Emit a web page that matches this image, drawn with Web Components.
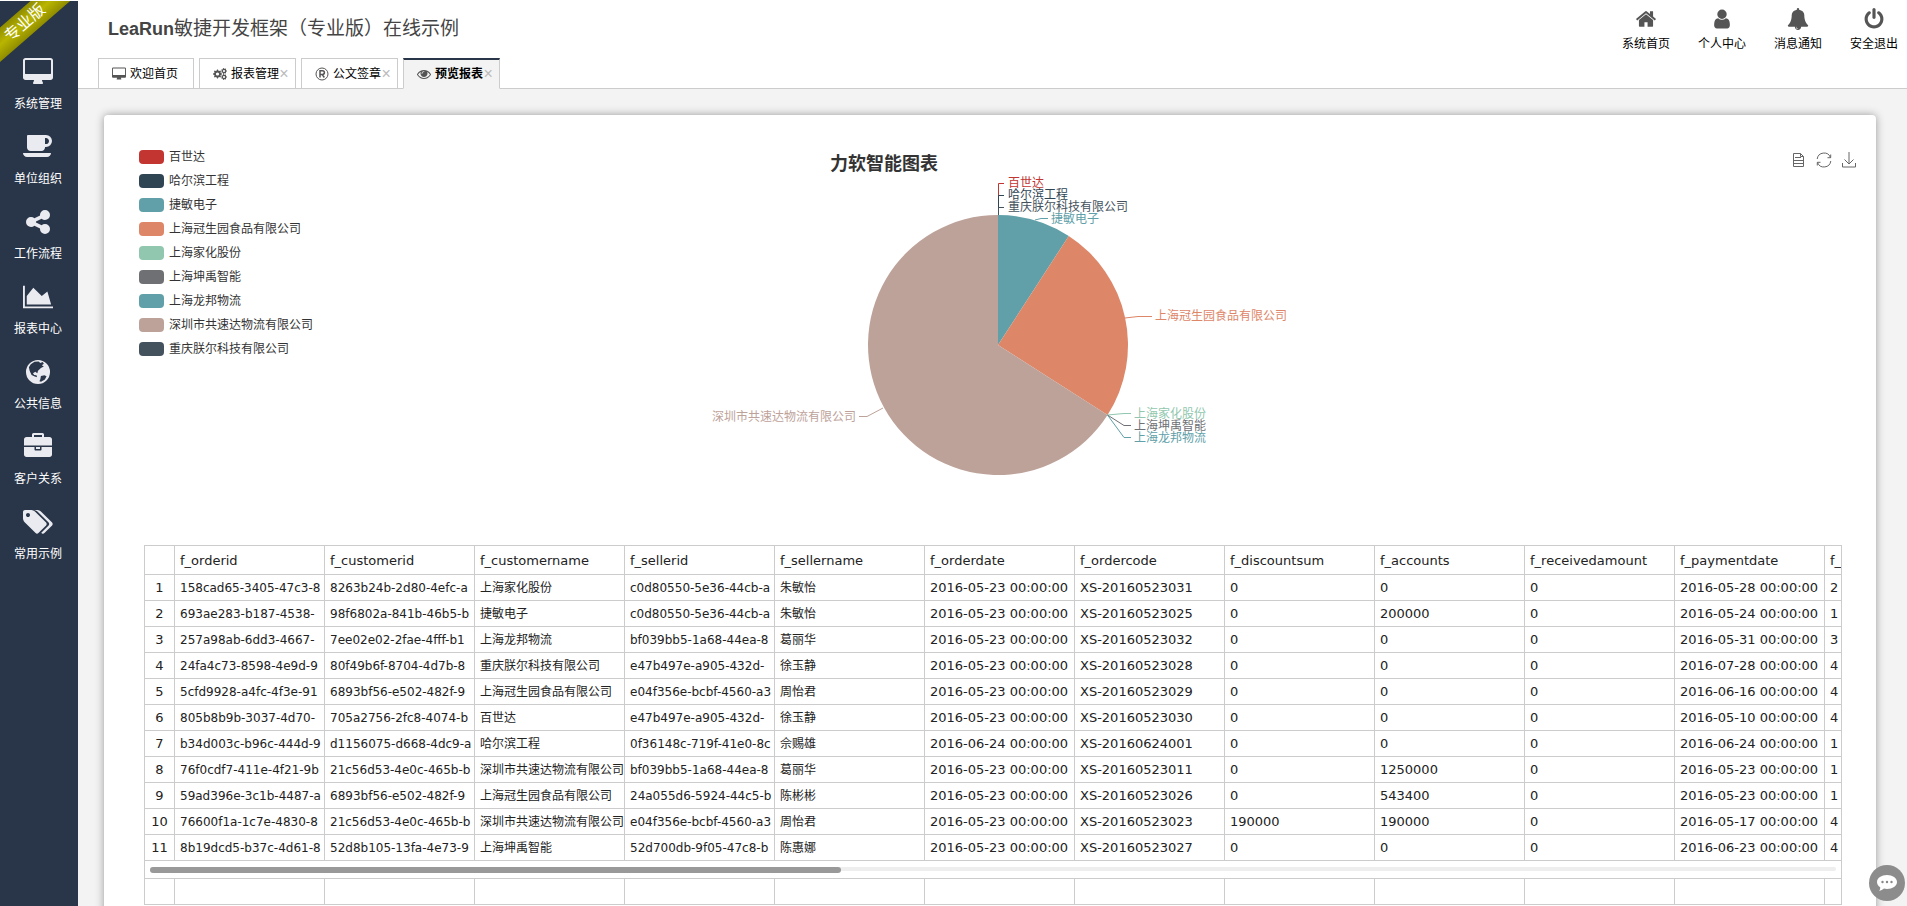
<!DOCTYPE html>
<html lang="zh-CN">
<head>
<meta charset="utf-8">
<title>LeaRun敏捷开发框架</title>
<style>
html, body { margin: 0; height: 100%; }
body { font-family: "Liberation Sans", "Noto Sans CJK SC", sans-serif; font-size: 12px; line-height: 16px; color: #000; background: #fff; overflow: hidden; }
</style>
</head>
<body>
<lr-app>
  <lr-sidebar slot="side"></lr-sidebar>
  <lr-header slot="head"></lr-header>
  <lr-report></lr-report>
  <lr-chat slot="chat"></lr-chat>
</lr-app>
<script>
const ICONS = {
  desktop: ['-64 0 1920 1792', 'M1728 992v-832q0-13-9.5-22.5t-22.5-9.5h-1600q-13 0-22.5 9.5t-9.5 22.5v832q0 13 9.5 22.5t22.5 9.5h1600q13 0 22.5-9.5t9.5-22.5zm128-832v1088q0 66-47 113t-113 47h-544q0 37 16 77.5t32 71 16 43.5q0 26-19 45t-45 19h-512q-26 0-45-19t-19-45q0-14 16-44t32-70 16-78h-544q-66 0-113-47t-47-113v-1088q0-66 47-113t113-47h1600q66 0 113 47t47 113z'],
  coffee: ['0 128 1920 1792', 'M1664 640q0-80-56-136t-136-56h-64v384h64q80 0 136-56t56-136zm-1664 768h1792q0 106-75 181t-181 75h-1280q-106 0-181-75t-75-181zm1856-768q0 159-112.500 271.500t-271.500 112.500h-64v32q0 92-66 158t-158 66h-704q-92 0-158-66t-66-158v-736q0-26 19-45t45-19h1152q159 0 271.500 112.500t112.500 271.500z'],
  share: ['0 0 1792 1792', 'M1344 1024q133 0 226.500 93.500t93.500 226.500-93.500 226.500-226.500 93.500-226.500-93.500-93.500-226.500q0-12 2-34l-360-180q-92 86-218 86-133 0-226.500-93.500t-93.500-226.500 93.500-226.500 226.500-93.500q126 0 218 86l360-180q-2-22-2-34 0-133 93.500-226.500t226.500-93.500 226.500 93.500 93.500 226.500-93.500 226.500-226.500 93.500q-126 0-218-86l-360 180q2 22 2 34t-2 34l360 180q92-86 218-86z'],
  area: ['0 0 2048 1792', 'M2048 1536v128h-2048v-1536h128v1408h1920zm-384-1024l256 896h-1664v-576l448-576 576 576z'],
  globe: ['0 0 24 24', 'M12 1.700a10.300 10.300 0 1 0 0 20.600a10.300 10.300 0 1 0 0-20.600zM9 3.200l3.500-.3 1.500 1.300 2-.8 1 1.600-1.700 1.200 1.700 1-2.500 1.300-2.500 2.500-.6 2-1.700-1.200-2 1.200 1 1.500 2 .3.500 1.800-2-.7-2.700-1.400-1.600-3.300-.7-3.200 1.600-2.700zM14.500 15.500l3-.8 1.800 1-1.400 2.800-3.300 1.900-1.400-.4.800-1.800z', 'evenodd'],
  briefcase: ['0 0 1792 1792', 'M640 256h512v-128h-512v128zm1152 640v480q0 66-47 113t-113 47h-1472q-66 0-113-47t-47-113v-480h672v160q0 26 19 45t45 19h320q26 0 45-19t19-45v-160h672zm-768 0v128h-256v-128h256zm768-480v384h-1792v-384q0-66 47-113t113-47h352v-160q0-40 28-68t68-28h576q40 0 68 28t28 68v160h352q66 0 113 47t47 113z'],
  tags: ['0 0 1920 1792', 'M448 448q0-53-37.500-90.500t-90.500-37.500-90.500 37.500-37.500 90.500 37.500 90.500 90.500 37.500 90.500-37.500 37.500-90.500zm1067 576q0 53-37 90l-491 492q-39 37-91 37-53 0-90-37l-715-716q-38-37-64.500-101t-26.500-117v-416q0-52 38-90t90-38h416q53 0 117 26.500t102 64.500l715 714q37 39 37 91zm384 0q0 53-37 90l-491 492q-39 37-91 37-36 0-59-14t-53-45l470-470q37-37 37-90 0-52-37-91l-715-714q-38-38-102-64.500t-117-26.500h224q53 0 117 26.500t102 64.500l715 714q37 39 37 91z'],
  home: ['0 0 1792 1792', 'M1472 992v480q0 26-19 45t-45 19h-384v-384h-256v384h-384q-26 0-45-19t-19-45v-480q0-1 .5-3t.5-3l575-474 575 474q1 2 1 6zm223-69l-62 74q-8 9-21 11h-3q-13 0-21-7l-692-577-692 577q-12 8-24 7-13-2-21-11l-62-74q-8-10-7-23.500t11-21.500l719-599q32-26 76-26t76 26l244 204v-195q0-14 9-23t23-9h192q14 0 23 9t9 23v408l219 182q10 8 11 21.500t-7 23.500z'],
  user: ['0 0 1792 1792', 'M1536 1399q0 109-62.500 187t-150.500 78h-854q-88 0-150.500-78t-62.500-187q0-85 8.500-160.500t31.500-152 58.500-131 94-89 134.500-34.500q131 128 313 128t313-128q76 0 134.500 34.500t94 89 58.500 131 31.500 152 8.500 160.500zm-256-887q0 159-112.500 271.500t-271.500 112.500-271.500-112.500-112.500-271.500 112.500-271.500 271.500-112.500 271.500 112.500 112.500 271.500z'],
  bell: ['0 0 1792 1792', 'M912 1696q0-16-16-16-59 0-101.500-42.500t-42.500-101.500q0-16-16-16t-16 16q0 73 51.500 124.500t124.500 51.500q16 0 16-16zm816-288q0 52-38 90t-90 38h-448q0 106-75 181t-181 75-181-75-75-181h-448q-52 0-90-38t-38-90q50-42 91-88t85-119.500 74.500-158.500 50-206 19.500-260q0-152 117-282.500t307-158.500q-8-19-8-39 0-40 28-68t68-28 68 28 28 68q0 20-8 39 190 28 307 158.500t117 282.500q0 139 19.500 260t50 206 74.500 158.500 85 119.500 91 88z'],
  power: ['0 0 1792 1792', 'M1664 896q0 156-61 298t-164 245-245 164-298 61-298-61-245-164-164-245-61-298q0-182 80.500-343t226.500-270q43-32 95.500-25t83.500 50q32 42 24.500 94.500t-49.500 84.500q-98 74-151.500 181t-53.500 228q0 104 40.500 198.500t109.500 163.500 163.500 109.500 198.500 40.500 198.500-40.500 163.500-109.500 109.500-163.500 40.500-198.500q0-121-53.500-228t-151.500-181q-42-32-49.500-84.500t24.500-94.500q31-43 84-50t95 25q146 109 226.500 270t80.500 343zm-640-768v640q0 52-38 90t-90 38-90-38-38-90v-640q0-52 38-90t90-38 90 38 38 90z'],
  eye: ['0 0 1792 1792', 'M1664 960q-152-236-381-353 61 104 61 225 0 185-131.500 316.500t-316.500 131.500-316.500-131.500-131.500-316.500q0-121 61-225-229 117-381 353 133 205 333.500 326.500t434.500 121.500 434.500-121.500 333.500-326.500zm-720-384q0-20-14-34t-34-14q-125 0-214.500 89.500t-89.500 214.500q0 20 14 34t34 14 34-14 14-34q0-86 61-147t147-61q20 0 34-14t14-34zm848 384q0 34-20 69-140 230-376.500 368.500t-499.500 138.500-499.500-139-376.500-368q-20-35-20-69t20-69q140-229 376.500-368t499.500-139 499.500 139 376.500 368q20 35 20 69z']
};
const gear = (x, y, r, teeth) => {
  let d = '';
  for (let i = 0; i < teeth * 4; i++) {
    const a = (i - .5) * Math.PI / teeth / 2, q = (i % 4 < 2) ? r : r * .76;
    d += (i ? 'L' : 'M') + (x + q * Math.cos(a)).toFixed(2) + ' ' + (y + q * Math.sin(a)).toFixed(2);
  }
  const h = r * .36;
  return d + `zM${x - h} ${y}a${h} ${h} 0 1 0 ${2 * h} 0a${h} ${h} 0 1 0 ${-2 * h} 0z`;
};
ICONS.cogs = ['0 0 28 24', gear(9, 12, 9, 8) + gear(22, 6, 6, 7) + gear(22, 18, 6, 7), 'evenodd'];

const LINE_ICONS = {
  registered: '<svg viewBox="0 0 14 14" fill="none" stroke="currentColor"><circle cx="7" cy="7" r="6" stroke-width="1"/><path d="M5 10.500V3.700h2.500a1.900 1.900 0 0 1 0 3.800H5M7.300 7.500l2 3" stroke-width="1.500"/></svg>',
  doc: '<svg viewBox="0 0 14 16" fill="none" stroke="currentColor"><path d="M1.500 1.500h7l3 3v10h-10zM8.500 1.500v3h3M3 5.500h6M2 8.500h9M2 11.500h9"/></svg>',
  refresh: '<svg viewBox="0 0 16 16" fill="none" stroke="currentColor"><path d="M1.200 7A6.900 6.900 0 0 1 14.500 5.500M14.800 9A6.900 6.900 0 0 1 1.500 10.500M14.700 2.500V5.700h-3.200M1.300 13.500V10.300H4.500"/></svg>',
  save: '<svg viewBox="0 0 16 16" fill="none" stroke="currentColor"><path d="M8 0v11.500M3.500 7.500l4.500 4.500L12.500 7.500M1.500 11v4h13V11"/></svg>'
};

const define = (name, html) => customElements.define(name, class extends HTMLElement {
  constructor() {
    super();
    const t = document.createElement('template');
    t.innerHTML = html;
    this.attachShadow({ mode: 'open' }).appendChild(t.content.cloneNode(true));
  }
});

customElements.define('lr-icon', class extends HTMLElement {
  constructor() { super(); this.attachShadow({ mode: 'open' }); }
  connectedCallback() {
    const n = this.getAttribute('name'), i = ICONS[n];
    this.shadowRoot.innerHTML = '<style>:host{display:block;width:16px;height:16px}svg{display:block;width:100%;height:100%}</style>' +
      (i ? `<svg viewBox="${i[0]}" fill="currentColor"><path fill-rule="${i[2] || 'nonzero'}" d="${i[1]}"/></svg>` : LINE_ICONS[n]);
  }
});

define('lr-app', `<style>
:host{display:flex;height:100vh}
.main{flex:1;min-width:0;display:flex;flex-direction:column}
</style><slot name="side"></slot><div class="main"><slot name="head"></slot><slot></slot></div><slot name="chat"></slot>`);

define('lr-sidebar', `<style>
:host{display:block;position:relative;width:78px;flex:none;background:#293548;overflow:hidden;margin-top:1px}
nav{display:flex;flex-direction:column;padding-top:53px}
a{display:flex;flex-direction:column;align-items:center;height:75px;color:#fff;text-decoration:none;padding-right:2px}
lr-icon{width:30px;height:36px;color:#e9ebf0}
lr-icon[name=share],lr-icon[name=globe],lr-icon[name=briefcase]{width:28px}
span{margin-top:6px}
.ribbon{position:absolute;left:-39px;top:9px;width:128px;height:26px;line-height:26px;text-align:center;color:#fff;font-size:16px;background:linear-gradient(#8f8c00,#b9b500 50%,#908d00);transform:rotate(-41deg)}
</style><nav>${[['desktop', '系统管理'], ['coffee', '单位组织'], ['share', '工作流程'], ['area', '报表中心'], ['globe', '公共信息'], ['briefcase', '客户关系'], ['tags', '常用示例']].map(([i, t]) => `<a href="#"><lr-icon name="${i}"></lr-icon><span>${t}</span></a>`).join('')}</nav><div class="ribbon">专业版</div>`);

define('lr-header', `<style>
:host{display:flex;flex-direction:column;justify-content:space-between;height:88px;flex:none;border-bottom:1px solid #ccc;background:#fff}
.top{display:flex;justify-content:space-between}
h1{margin:17px 0 0 30px;font-size:18px;line-height:24px;color:#444}
h1 span{font-size:19px;font-weight:400}
.tools{display:flex;padding:8px 8px 0 0;gap:26px}
.tools a{display:flex;flex-direction:column;align-items:center;gap:6px;width:50px;color:#000;text-decoration:none;white-space:nowrap}
.tools lr-icon{width:22px;height:22px;color:#555}
.tabs{display:flex;gap:5px;margin:0 0 -1px 20px}
.tab{box-sizing:border-box;display:flex;align-items:center;height:31px;border:1px solid #ccc;background:#fff;padding:0 6px 0 13px}
.tab lr-icon{width:14px;height:14px;margin-right:4px;color:#555}
.tab a{color:#000;text-decoration:none}
.tab button{border:0;padding:0;margin:0;width:10px;background:none;font:16px/16px "Liberation Sans",sans-serif;color:#bbb}
.tab:first-child{padding-right:15px}
.tab.on{border-top:2px solid #293548;border-bottom-color:#f3f3f3;background:#f3f3f3;font-weight:700}
</style><div class="top"><h1>LeaRun<span>敏捷开发框架（专业版）在线示例</span></h1><div class="tools">${[['home', '系统首页'], ['user', '个人中心'], ['bell', '消息通知'], ['power', '安全退出']].map(([i, t]) => `<a href="#"><lr-icon name="${i}"></lr-icon>${t}</a>`).join('')}</div></div>
<div class="tabs">${[['desktop', '欢迎首页'], ['cogs', '报表管理'], ['registered', '公文签章'], ['eye', '预览报表']].map(([i, t], k) => `<div class="tab${k === 3 ? ' on' : ''}"><lr-icon name="${i}"></lr-icon><a href="#">${t}</a>${k ? '<button aria-label="关闭">×</button>' : ''}</div>`).join('')}</div>`);

define('lr-report', `<style>
:host{display:block;flex:1;min-height:0;overflow:hidden;background:#f3f3f3;padding:26px 31px 0 26px}
.panel{background:#fff;border-radius:4px;box-shadow:0 0 8px #999;padding:30px 14px 30px 30px}
lr-table{margin:0 20px 0 10px}
</style><div class="panel"><lr-chart></lr-chart><lr-table></lr-table></div>`);

const LEGEND = [['百世达', '#c23531'], ['哈尔滨工程', '#2f4554'], ['捷敏电子', '#61a0a8'], ['上海冠生园食品有限公司', '#dd8668'], ['上海家化股份', '#91c7ae'], ['上海坤禹智能', '#6e7074'], ['上海龙邦物流', '#61a0a8'], ['深圳市共速达物流有限公司', '#bda29a'], ['重庆朕尔科技有限公司', '#44525d']];

/* The pie is drawn around the origin with radius 130; angles in degrees, clockwise from the top. */
const R = 130;
const pt = a => [R * Math.sin(a * Math.PI / 180), -R * Math.cos(a * Math.PI / 180)].map(v => v.toFixed(2)).join(' ');
const slice = (a, b, c) => `<path fill="${c}" d="M0 0L${pt(a)}A${R} ${R} 0 ${b - a > 180 ? 1 : 0} 1 ${pt(b)}z"/>`;
const total = 2183400, a1 = 200000 / total * 360, a2 = 743400 / total * 360;
const label = (x, y, i, line, end) => `<path fill="none" stroke="${LEGEND[i][1]}" d="${line}"/><text x="${x}" y="${y + 4}" fill="${LEGEND[i][1]}"${end ? ' text-anchor="end"' : ''}>${LEGEND[i][0]}</text>`;

define('lr-chart', `<style>
:host{display:grid;grid-template-columns:1fr auto 1fr;height:400px}
ul{list-style:none;margin:0;padding:0 0 0 5px}
li{display:flex;align-items:center;height:24px;gap:5px;color:#333}
li i{width:25px;height:14px;border-radius:4px}
svg.pie{display:block;width:600px;height:400px;font-size:12px}
.title{font-size:18px;font-weight:700;fill:#333}
.tools{display:flex;justify-content:flex-end;gap:9px;padding:7px 5px 0 0;color:#666;align-self:start}
button{border:0;padding:0;background:none;color:inherit}
</style><ul>${LEGEND.map(([t, c]) => `<li><i style="background:${c}"></i>${t}</li>`).join('')}</ul>
<svg class="pie" viewBox="-300 -200 600 400">
<text class="title" x="-168" y="-175">力软智能图表</text>
${slice(0, a1, LEGEND[2][1])}${slice(a1, a2, LEGEND[3][1])}${slice(a2, 360, LEGEND[7][1])}
${label(10, -162, 0, 'M.5-130V-161.500H6')}
${label(10, -150, 1, 'M.5-130V-149.500H6')}
${label(10, -138, 8, 'M.5-130V-137.500H6')}
${label(53, -126, 2, 'M37-125L43-126.500H50')}
${label(157, -29, 3, 'M127-27L140-28.500H154')}
${label(136, 69, 4, 'M109.500 70L126 68.500H133')}
${label(136, 81, 5, 'M109.500 70L126 80.500H133')}
${label(136, 93, 6, 'M109.500 70L126 92.500H133')}
${label(-142, 72, 7, 'M-115 63L-131 71.500H-139', 1)}
</svg>
<div class="tools"><button aria-label="数据视图"><lr-icon name="doc"></lr-icon></button><button aria-label="刷新"><lr-icon name="refresh"></lr-icon></button><button aria-label="保存"><lr-icon name="save"></lr-icon></button></div>`);

const COLS = ['f_orderid', 'f_customerid', 'f_customername', 'f_sellerid', 'f_sellername', 'f_orderdate', 'f_ordercode', 'f_discountsum', 'f_accounts', 'f_receivedamount', 'f_paymentdate', 'f_'];
const ROWS = `158cad65-3405-47c3-8|8263b24b-2d80-4efc-a|上海家化股份|c0d80550-5e36-44cb-a|朱敏怡|05-23|0523031|0|0|05-28|2
693ae283-b187-4538-|98f6802a-841b-46b5-b|捷敏电子|c0d80550-5e36-44cb-a|朱敏怡|05-23|0523025|0|200000|05-24|1
257a98ab-6dd3-4667-|7ee02e02-2fae-4fff-b1|上海龙邦物流|bf039bb5-1a68-44ea-8|葛丽华|05-23|0523032|0|0|05-31|3
24fa4c73-8598-4e9d-9|80f49b6f-8704-4d7b-8|重庆朕尔科技有限公司|e47b497e-a905-432d-|徐玉静|05-23|0523028|0|0|07-28|4
5cfd9928-a4fc-4f3e-91|6893bf56-e502-482f-9|上海冠生园食品有限公司|e04f356e-bcbf-4560-a3|周怡君|05-23|0523029|0|0|06-16|4
805b8b9b-3037-4d70-|705a2756-2fc8-4074-b|百世达|e47b497e-a905-432d-|徐玉静|05-23|0523030|0|0|05-10|4
b34d003c-b96c-444d-9|d1156075-d668-4dc9-a|哈尔滨工程|0f36148c-719f-41e0-8c|佘赐雄|06-24|0624001|0|0|06-24|1
76f0cdf7-411e-4f21-9b|21c56d53-4e0c-465b-b|深圳市共速达物流有限公司|bf039bb5-1a68-44ea-8|葛丽华|05-23|0523011|0|1250000|05-23|1
59ad396e-3c1b-4487-a|6893bf56-e502-482f-9|上海冠生园食品有限公司|24a055d6-5924-44c5-b|陈彬彬|05-23|0523026|0|543400|05-23|1
76600f1a-1c7e-4830-8|21c56d53-4e0c-465b-b|深圳市共速达物流有限公司|e04f356e-bcbf-4560-a3|周怡君|05-23|0523023|190000|190000|05-17|4
8b19dcd5-b37c-4d61-8|52d8b105-13fa-4e73-9|上海坤禹智能|52d700db-9f05-47c8-b|陈惠娜|05-23|0523027|0|0|06-23|4`.split('\n').map(r => {
  const c = r.split('|');
  return [c[0], c[1], c[2], c[3], c[4], `2016-${c[5]} 00:00:00`, 'XS-2016' + c[6], c[7], c[8], '0', `2016-${c[9]} 00:00:00`, c[10]];
});
const cell = (v, i) => `<td${i < 5 ? ' class="small"' : ''}>${v}</td>`;

define('lr-table', `<style>
:host{display:block;border:1px solid #ccc;overflow:hidden;font-family:"DejaVu Sans","Noto Sans CJK SC",sans-serif;font-size:13px;color:#222}
table{table-layout:fixed;width:1830px;border-collapse:separate;border-spacing:0}
col{width:150px}col:first-child{width:30px}
th,td{box-sizing:border-box;height:26px;padding:0 0 0 5px;border-right:1px solid #ccc;border-bottom:1px solid #ccc;text-align:left;font-weight:400;white-space:nowrap;overflow:hidden;line-height:16px}
thead th{height:29px;padding-top:1px}
tbody th{padding:0;text-align:center}
td.small{font-size:12px}
.bar{height:18px;box-sizing:border-box;border-bottom:1px solid #ccc;padding:6px 5px 0}
.track{height:4px;background:#eee;border-radius:3px}
.thumb{height:6px;width:41%;background:#999;border-radius:3px}
tfoot td{border-bottom:0;height:25px}
</style><table><colgroup>${'<col>'.repeat(13)}</colgroup><thead><tr><th></th>${COLS.map(c => `<th>${c}</th>`).join('')}</tr></thead><tbody>${ROWS.map((r, i) => `<tr><th>${i + 1}</th>${r.map(cell).join('')}</tr>`).join('')}</tbody></table>
<div class="bar"><div class="track"><div class="thumb"></div></div></div>
<table aria-hidden="true"><colgroup>${'<col>'.repeat(13)}</colgroup><tfoot><tr>${'<td></td>'.repeat(13)}</tr></tfoot></table>`);

define('lr-chat', `<style>
:host{display:block;position:fixed;right:2px;bottom:5px}
button{display:block;width:36px;height:36px;border:0;padding:0;border-radius:50%;background:#8c8c8c}
svg{display:block;margin:auto}
</style><button aria-label="在线客服"><svg width="22" height="20" viewBox="0 0 22 20"><path fill="#fff" d="M11 2c5.500 0 10 3.100 10 7s-4.500 7-10 7c-1 0-2-.1-3-.4-1.400 1.200-3 2-5 2.400 1-1.200 1.300-2.400 1.200-3.800C2.200 13 1 11.100 1 9c0-3.900 4.500-7 10-7z"/><g fill="#888"><circle cx="6.500" cy="9" r="1.200"/><circle cx="11" cy="9" r="1.200"/><circle cx="15.500" cy="9" r="1.200"/></g></svg></button>`);
</script>
</body>
</html>
